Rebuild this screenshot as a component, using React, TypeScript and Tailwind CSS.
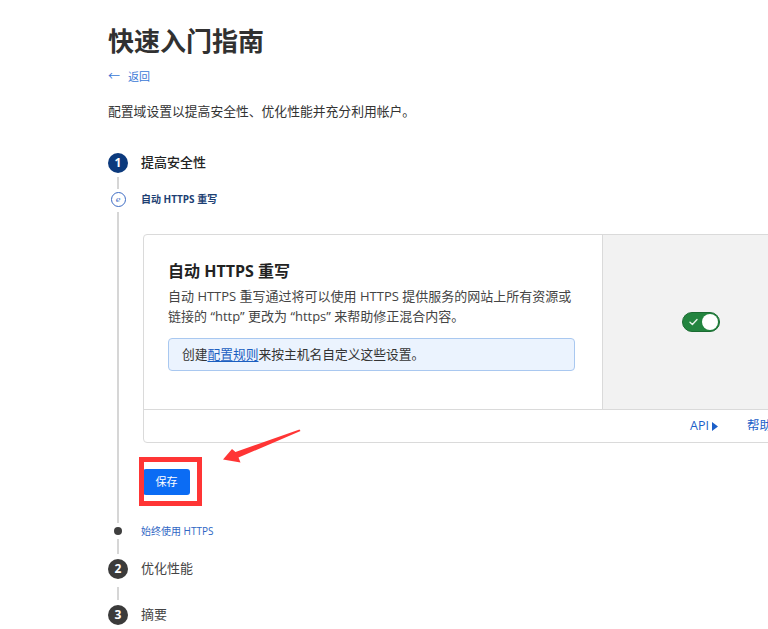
import React from "react";

const Line = ({ className = "" }: { className?: string }) => (
  <div className={`w-[2px] bg-[#d6d6d6] ${className}`} />
);

const Tri = () => (
  <svg width="6" height="9" viewBox="0 0 6 9" className="ml-[3px]">
    <path d="M0 0 L6 4.5 L0 9 Z" fill="currentColor" />
  </svg>
);

export default function App() {
  return (
    <div className="relative w-[768px] h-[629px] overflow-hidden bg-white font-['Open_Sans','Noto_Sans_CJK_SC',sans-serif] text-[#333]">
      <div className="pl-[108px] pt-[23px]">
        <h1 className="text-[26px] leading-[36px] font-bold text-[#313131]">快速入门指南</h1>
        <div className="mt-[10px] flex items-center text-[11px] leading-[16px] text-[#3a78d6]">
          <span className="mr-[8px] text-[12px]">←</span>
          <span>返回</span>
        </div>
        <p className="mt-[17px] text-[12.8px] leading-[18px] text-[#333]">
          配置域设置以提高安全性、优化性能并充分利用帐户。
        </p>

        <div className="mt-[33px] flex flex-col">
          {/* Step 1 */}
          <div className="flex h-5">
            <div className="w-5 shrink-0 flex justify-center">
              <div className="w-5 h-5 rounded-full bg-[#0c3a7d] text-white text-[12px] font-bold flex items-center justify-center leading-none">
                1
              </div>
            </div>
            <div className="ml-[13px] flex items-center text-[13px] font-medium text-[#222]">提高安全性</div>
          </div>
          <div className="flex h-[19px]">
            <div className="w-5 shrink-0 flex justify-center">
              <Line className="mt-[4px] h-[12px]" />
            </div>
          </div>
          {/* Sub 1 */}
          <div className="flex h-[15px]">
            <div className="w-5 shrink-0 flex justify-center">
              <div className="w-[15px] h-[15px] rounded-full border border-[#3d6cc4] bg-white flex items-center justify-center">
                <span className="text-[8px] italic leading-none text-[#3d6cc4] font-['DejaVu_Serif',serif]">e</span>
              </div>
            </div>
            <div className="ml-[13px] flex items-center text-[10px] font-bold text-[#1d3f73]">自动 HTTPS 重写</div>
          </div>
          {/* Content */}
          <div className="flex">
            <div className="w-5 shrink-0 flex justify-center">
              <Line className="mt-[5px] mb-[4px]" />
            </div>
            <div className="ml-[13px] shrink-0 pt-[27px] pb-[32px]">
              <div className="ml-[2px] w-[657px] border border-[#dadada] rounded-[4px] bg-white">
                <div className="flex h-[174px]">
                  <div className="w-[458px] shrink-0 pl-[24px] pt-[25px]">
                    <h2 className="text-[16px] leading-[22px] font-bold text-[#222]">自动 HTTPS 重写</h2>
                    <p className="mt-[4px] w-[410px] text-[13px] leading-[20px] text-[#444]">
                      自动 HTTPS 重写通过将可以使用 HTTPS 提供服务的网站上所有资源或链接的 “http” 更改为 “https” 来帮助修正混合内容。
                    </p>
                    <div className="mt-[12px] w-[407px] h-[33px] rounded-[4px] border border-[#a9c8f0] bg-[#ebf3fe] flex items-center px-[13px] text-[12.75px] text-[#333]">
                      创建<span className="text-[#1b5fc1] underline underline-offset-2">配置规则</span>来按主机名自定义这些设置。
                    </div>
                  </div>
                  <div className="flex-1 border-l border-[#dadada] bg-[#f2f2f2] flex items-center justify-center">
                    <div className="w-[38px] h-[20px] rounded-full bg-[#23843f] border border-[#1b6b32] flex items-center justify-between pl-[6px] pr-[1px]">
                      <svg width="9" height="8" viewBox="0 0 9 8">
                        <path d="M1 4.2 L3.4 6.4 L8 1.6" stroke="#e6f2e9" strokeWidth="1.4" fill="none" strokeLinecap="round" strokeLinejoin="round" />
                      </svg>
                      <div className="w-[16px] h-[16px] rounded-full bg-white" />
                    </div>
                  </div>
                </div>
                <div className="h-[33px] border-t border-[#dadada] flex items-center justify-end gap-[29px] pr-[18px] text-[12.5px] text-[#1c5fc8]">
                  <span className="flex items-center">API<Tri /></span>
                  <span className="flex items-center">帮助<Tri /></span>
                </div>
              </div>
              <div className="relative mt-[26px] ml-[2px] w-[47px]">
                <button className="w-[47px] h-[26px] rounded-[3px] bg-[#0b6cf4] text-white text-[11px] flex items-center justify-center">
                  保存
                </button>
                <div className="absolute left-[-4px] top-[-12px] w-[63px] h-[49px] border-[5px] border-[#ff3535]" />
              </div>
            </div>
          </div>
          {/* Sub 2 */}
          <div className="flex h-[8px]">
            <div className="w-5 shrink-0 flex justify-center">
              <div className="w-[8px] h-[8px] rounded-full bg-[#3f3f3f]" />
            </div>
            <div className="ml-[13px] flex items-center text-[10px] leading-[8px] text-[#2f66c4]">始终使用 HTTPS</div>
          </div>
          <div className="flex h-[24px]">
            <div className="w-5 shrink-0 flex justify-center">
              <Line className="mt-[4px] h-[15px]" />
            </div>
          </div>
          {/* Step 2 */}
          <div className="flex h-5">
            <div className="w-5 shrink-0 flex justify-center">
              <div className="w-5 h-5 rounded-full bg-[#3b3b3b] text-white text-[12px] font-bold flex items-center justify-center leading-none">
                2
              </div>
            </div>
            <div className="ml-[13px] flex items-center text-[13px] text-[#444]">优化性能</div>
          </div>
          <div className="flex h-[26px]">
            <div className="w-5 shrink-0 flex justify-center">
              <Line className="mt-[8px] h-[13px]" />
            </div>
          </div>
          {/* Step 3 */}
          <div className="flex h-5">
            <div className="w-5 shrink-0 flex justify-center">
              <div className="w-5 h-5 rounded-full bg-[#3b3b3b] text-white text-[12px] font-bold flex items-center justify-center leading-none">
                3
              </div>
            </div>
            <div className="ml-[13px] flex items-center text-[13px] text-[#444]">摘要</div>
          </div>
        </div>
      </div>

      <svg className="absolute left-0 top-0 pointer-events-none" width="768" height="629" viewBox="0 0 768 629">
        <polygon
          points="223,459.5 232,449 235.5,452 299.5,429.5 300.5,431 238.5,457.5 240.5,462.5"
          fill="#ff3535"
        />
      </svg>
    </div>
  );
}
